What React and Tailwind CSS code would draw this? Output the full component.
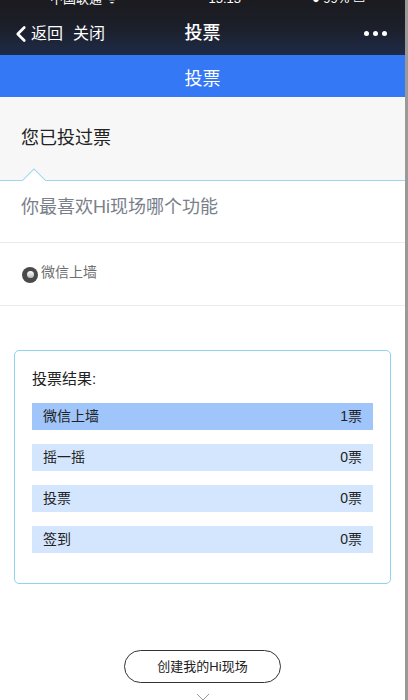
import { ChevronLeft } from 'lucide-react';

const results = [
  { name: '微信上墙', votes: 1, active: true },
  { name: '摇一摇', votes: 0 },
  { name: '投票', votes: 0 },
  { name: '签到', votes: 0 },
];

const font = { fontFamily: '"Liberation Sans", "Noto Sans CJK SC", sans-serif' };

export default function App() {
  return (
    <div className="w-[408px] h-[700px] overflow-hidden flex bg-white" style={font}>
      <div className="w-[405px] flex flex-col">
        {/* 状态栏 + 导航 */}
        <div className="h-[55px] shrink-0 bg-gradient-to-b from-[#1b1b1f] via-[#1c1f2a] to-[#1d2b48] flex flex-col">
          <div className="h-[10px] overflow-hidden flex justify-between px-[40px] text-white text-[13px] leading-none">
            <span className="-mt-[8px] ml-[10px]">中国联通 ᯤ</span>
            <span className="-mt-[8px] ml-[20px]">15:13</span>
            <span className="-mt-[8px]">● 99% ▭</span>
          </div>
          <div className="flex-1 flex items-center px-[8px] text-white relative pt-[2px]">
            <div className="flex items-center text-[16px]">
              <ChevronLeft size={26} strokeWidth={2.5} className="-mr-[3px]" />
              <span>返回</span>
              <span className="ml-[10px]">关闭</span>
            </div>
            <div className="absolute left-0 right-0 text-center text-[18px] font-medium pointer-events-none">投票</div>
            <div className="ml-auto mr-[10px] flex gap-[4px]">
              <span className="w-[5px] h-[5px] rounded-full bg-white"></span>
              <span className="w-[5px] h-[5px] rounded-full bg-white"></span>
              <span className="w-[5px] h-[5px] rounded-full bg-white"></span>
            </div>
          </div>
        </div>

        <div className="h-[42px] shrink-0 bg-[#3478f6] flex items-center justify-center text-white text-[18px] pt-[6px]">投票</div>

        <div className="h-[84px] shrink-0 bg-[#f7f7f7] relative flex items-center px-[21px] border-b border-[#9ed6ee]">
          <span className="text-[18px] text-[#222]">您已投过票</span>
          <div className="absolute left-[21px] -bottom-[1px] w-[26px] h-[14px] overflow-hidden">
            <div className="w-[18px] h-[18px] bg-white border border-[#9ed6ee] rotate-45 mx-auto mt-[5px]"></div>
          </div>
        </div>

        <div className="h-[62px] shrink-0 flex items-center px-[21px] border-b border-[#ececec]">
          <span className="text-[18px] text-[#7a808a] -mt-[8px]">你最喜欢Hi现场哪个功能</span>
        </div>

        <div className="h-[63px] shrink-0 flex items-center px-[22px] border-b border-[#ececec]">
          <span className="w-[16px] h-[16px] rounded-full bg-[#4a4a4a] flex items-center justify-center mr-[3px] mt-[1px]">
            <span className="w-[7px] h-[7px] rounded-full bg-gradient-to-b from-white to-[#bbb]"></span>
          </span>
          <span className="text-[14px] text-[#6f6f6f] -mt-[3px]">微信上墙</span>
        </div>

        <div className="mx-[14px] mt-[44px] h-[234px] shrink-0 border border-[#8fd3ee] rounded-[5px] px-[17px] pt-[17px]">
          <div className="text-[15px] text-[#222] mb-[12px]">投票结果:</div>
          <div className="flex flex-col gap-[14px]">
            {results.map((r) => (
              <div
                key={r.name}
                className={`h-[27px] flex items-center justify-between px-[11px] text-[14px] text-[#222] ${
                  r.active ? 'bg-[#9fc5fb]' : 'bg-[#d3e6fd]'
                }`}
              >
                <span>{r.name}</span>
                <span>{r.votes}票</span>
              </div>
            ))}
          </div>
        </div>

        <div className="flex justify-center mt-[66px] shrink-0">
          <button className="w-[157px] h-[33px] rounded-full border border-[#333] text-[13px] text-[#222] bg-white">
            创建我的Hi现场
          </button>
        </div>
        <div className="flex justify-center mt-[10px] shrink-0">
          <svg width="14" height="10" viewBox="0 0 14 10">
            <path d="M1 1 L7 7 L13 1" fill="none" stroke="#999" strokeWidth="1" />
          </svg>
        </div>
      </div>
      <div className="w-[3px] bg-[#999]"></div>
    </div>
  );
}
